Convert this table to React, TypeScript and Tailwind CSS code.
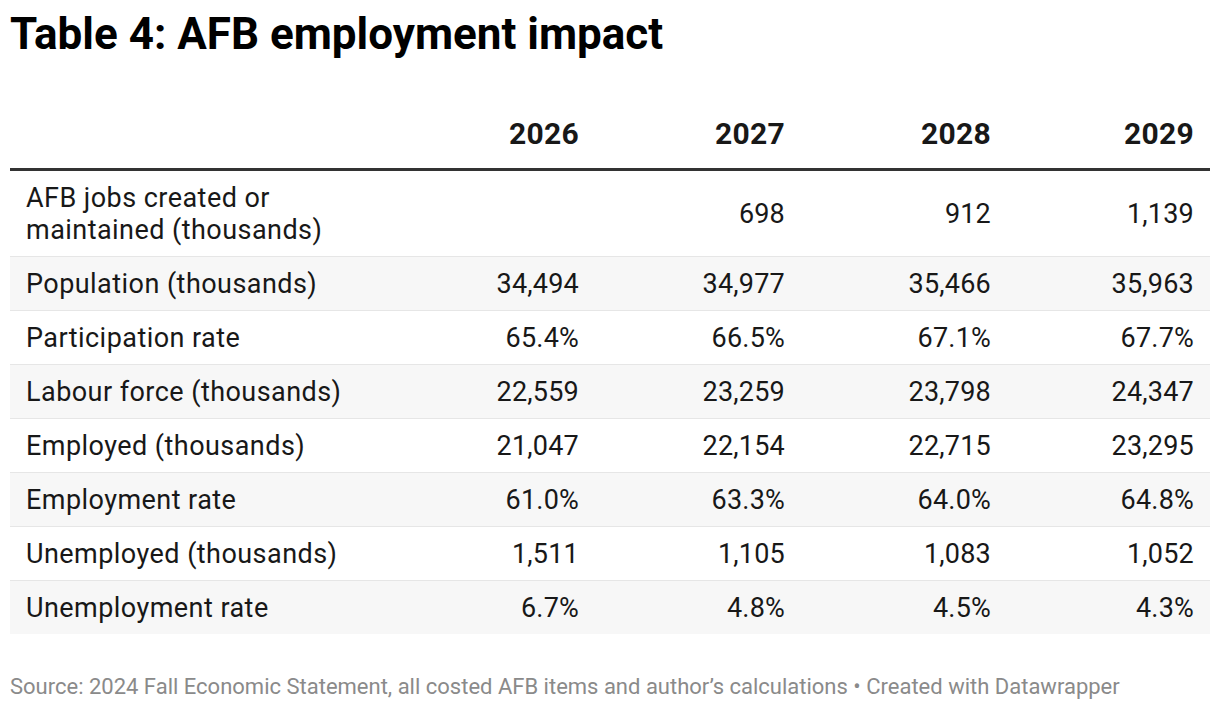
import React from 'react';

const years = ['2026', '2027', '2028', '2029'];

const rows: { label: string; values: string[] }[] = [
  { label: 'AFB jobs created or maintained (thousands)', values: ['', '698', '912', '1,139'] },
  { label: 'Population (thousands)', values: ['34,494', '34,977', '35,466', '35,963'] },
  { label: 'Participation rate', values: ['65.4%', '66.5%', '67.1%', '67.7%'] },
  { label: 'Labour force (thousands)', values: ['22,559', '23,259', '23,798', '24,347'] },
  { label: 'Employed (thousands)', values: ['21,047', '22,154', '22,715', '23,295'] },
  { label: 'Employment rate', values: ['61.0%', '63.3%', '64.0%', '64.8%'] },
  { label: 'Unemployed (thousands)', values: ['1,511', '1,105', '1,083', '1,052'] },
  { label: 'Unemployment rate', values: ['6.7%', '4.8%', '4.5%', '4.3%'] },
];

export default function App() {
  return (
    <div className="w-[1220px] h-[710px] bg-white px-[10px] pt-[10px] font-['Roboto',sans-serif] text-[#181818]">
      <h1 className="text-[44px] leading-[48px] font-bold text-black">Table 4: AFB employment impact</h1>

      <table className="mt-[60px] w-[1200px] table-fixed border-collapse">
        <colgroup>
          <col className="w-[363px]" />
          <col className="w-[206px]" />
          <col className="w-[206px]" />
          <col className="w-[206px]" />
          <col className="w-[219px]" />
        </colgroup>
        <thead>
          <tr className="border-b-[3px] border-[#333333]">
            <th />
            {years.map((y, i) => (
              <th
                key={y}
                className={`text-right align-bottom text-[30px] leading-[32px] tracking-[0.3px] font-bold pb-[18px] ${i === 3 ? 'pr-[16px]' : ''}`}
              >
                {y}
              </th>
            ))}
          </tr>
        </thead>
        <tbody>
          {rows.map((r, idx) => (
            <tr
              key={r.label}
              className={`border-b border-[#e6e6e6] last:border-b-0 ${idx % 2 === 1 ? 'bg-[#f7f7f7]' : 'bg-white'}`}
            >
              <td className="pl-[16px] pr-4 pt-[11px] pb-[10px] text-[27px] leading-[32px] tracking-[0.45px] align-middle">
                {r.label}
              </td>
              {r.values.map((v, i) => (
                <td
                  key={i}
                  className={`text-right pt-[11px] pb-[10px] text-[27px] leading-[32px] tracking-[0.2px] align-middle ${i === 3 ? 'pr-[16px]' : ''}`}
                >
                  {v}
                </td>
              ))}
            </tr>
          ))}
        </tbody>
      </table>

      <p className="mt-[39px] text-[22px] leading-[28px] text-[#8a8a8a]">
        Source: 2024 Fall Economic Statement, all costed AFB items and author’s calculations • Created with Datawrapper
      </p>
    </div>
  );
}
